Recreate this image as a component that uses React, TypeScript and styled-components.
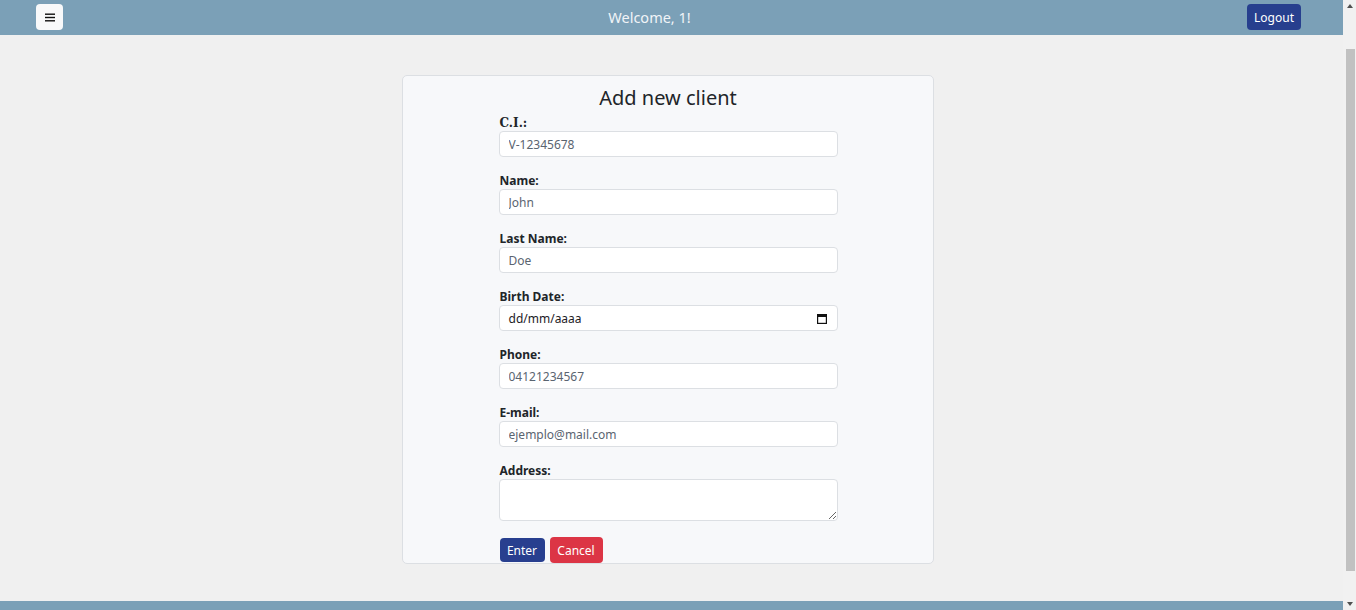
import React from "react";
import styled, { createGlobalStyle } from "styled-components";

const GlobalStyle = createGlobalStyle`
  html, body { margin: 0; padding: 0; }
  body {
    background: #f0f0f0;
    font-family: "Noto Sans", "DejaVu Sans", sans-serif;
    color: #212529;
    overflow: hidden;
  }
  * { box-sizing: border-box; }
`;

const Page = styled.div`
  display: flex;
  flex-direction: column;
  margin-right: 13px;
`;

const NavBar = styled.header`
  height: 35px;
  background: #7ba0b7;
  display: flex;
  align-items: center;
  justify-content: space-between;
  padding: 0 42px 1px 36px;
`;

const MenuButton = styled.button`
  width: 27px;
  height: 26px;
  border: none;
  border-radius: 4px;
  background: #f8f9fa;
  display: flex;
  align-items: center;
  justify-content: center;
  padding: 0;
  cursor: pointer;
`;

const Welcome = styled.span`
  color: #f1f4f7;
  font-size: 14.5px;
  line-height: 20px;
  margin-right: 11px;
`;

const LogoutButton = styled.button`
  height: 26px;
  width: 54px;
  border: none;
  border-radius: 4px;
  background: #273f8e;
  color: #ffffff;
  font-family: "Noto Sans", sans-serif;
  font-size: 12px;
  padding: 0;
  cursor: pointer;
`;

const Main = styled.main`
  display: flex;
  justify-content: center;
  padding: 40px 7px 37px 0;
`;

const Card = styled.section`
  width: 532px;
  background: #f7f8fa;
  border: 1px solid #dcdfe3;
  border-radius: 5px;
  padding: 8px 0 0;
  display: flex;
  flex-direction: column;
  align-items: center;
`;

const Title = styled.h2`
  margin: 0 0 4px;
  font-size: 20px;
  font-weight: 400;
  line-height: 27px;
  color: #212529;
`;

const Form = styled.form`
  width: 339px;
  display: flex;
  flex-direction: column;
  gap: 16px;
`;

const Field = styled.div`
  display: flex;
  flex-direction: column;
  gap: 2px;
`;

const Label = styled.label<{ $serif?: boolean }>`
  font-size: 12px;
  font-weight: 700;
  line-height: 14px;
  padding: 1px 0 0 1px;
  margin-bottom: -1px;
  color: #212529;
  font-family: ${(p) => (p.$serif ? '"DejaVu Serif", serif' : '"Noto Sans", sans-serif')};
`;

const Input = styled.input`
  height: 26px;
  width: 100%;
  border: 1px solid #dcdfe3;
  border-radius: 4px;
  background: #ffffff;
  padding: 0 9px;
  font-family: "Noto Sans", sans-serif;
  font-size: 12px;
  color: #212529;
  outline: none;
  &::placeholder { color: #5a6470; }
`;

const DateBox = styled.div`
  height: 26px;
  width: 100%;
  border: 1px solid #dcdfe3;
  border-radius: 4px;
  background: #ffffff;
  padding: 0 10px 0 9px;
  display: flex;
  align-items: center;
  justify-content: space-between;
  font-size: 12px;
  color: #1d2125;
`;

const TextArea = styled.textarea`
  height: 42px;
  width: 100%;
  border: 1px solid #dcdfe3;
  border-radius: 4px;
  background: #ffffff;
  resize: vertical;
  font-family: "Noto Sans", sans-serif;
  font-size: 12px;
  display: block;
  outline: none;
`;

const Actions = styled.div`
  display: flex;
  align-items: center;
  gap: 5px;
  padding-left: 1px;
`;

const ActionButton = styled.button<{ $variant: "primary" | "danger" }>`
  border: none;
  border-radius: 4px;
  color: #ffffff;
  font-family: "Noto Sans", sans-serif;
  font-size: 12px;
  padding: 0;
  cursor: pointer;
  background: ${(p) => (p.$variant === "primary" ? "#283f8f" : "#dc3545")};
  width: ${(p) => (p.$variant === "primary" ? "45px" : "53px")};
  height: ${(p) => (p.$variant === "primary" ? "24px" : "26px")};
`;

const Footer = styled.footer`
  height: 40px;
  background: #7ba0b7;
`;

const ScrollTrack = styled.div`
  position: fixed;
  top: 0;
  right: 0;
  width: 13px;
  height: 100vh;
  background: #f1f1f1;
  display: flex;
  flex-direction: column;
  align-items: center;
  justify-content: space-between;
  padding: 4px 0 4px;
`;

const ScrollThumb = styled.div`
  width: 9px;
  height: 522px;
  margin: 0 0 0 1px;
  background: #c1c1c1;
`;

const Arrow = styled.div<{ $down?: boolean }>`
  width: 0;
  height: 0;
  border-left: 3.5px solid transparent;
  border-right: 3.5px solid transparent;
  ${(p) =>
    p.$down
      ? "border-top: 4px solid #505050;"
      : "border-bottom: 4px solid #505050;"}
`;

const ThumbZone = styled.div`
  flex: 1;
  display: flex;
  flex-direction: column;
  padding-top: 41px;
  align-self: stretch;
  align-items: center;
`;

const fields = [
  { label: "Name:", placeholder: "John" },
  { label: "Last Name:", placeholder: "Doe" },
];

export default function App() {
  return (
    <Page>
      <GlobalStyle />
      <NavBar>
        <MenuButton aria-label="menu">
          <svg width="10" height="9" viewBox="0 0 10 9">
            <rect x="0" y="0.5" width="10" height="1.4" fill="#111" />
            <rect x="0" y="3.8" width="10" height="1.4" fill="#111" />
            <rect x="0" y="7.1" width="10" height="1.4" fill="#111" />
          </svg>
        </MenuButton>
        <Welcome>Welcome, 1!</Welcome>
        <LogoutButton>Logout</LogoutButton>
      </NavBar>
      <Main>
        <Card>
          <Title>Add new client</Title>
          <Form onSubmit={(e) => e.preventDefault()}>
            <Field>
              <Label $serif>C.I.:</Label>
              <Input placeholder="V-12345678" />
            </Field>
            {fields.map((f) => (
              <Field key={f.label}>
                <Label>{f.label}</Label>
                <Input placeholder={f.placeholder} />
              </Field>
            ))}
            <Field>
              <Label>Birth Date:</Label>
              <DateBox>
                <span>dd/mm/aaaa</span>
                <svg width="10" height="11" viewBox="0 0 10 11">
                  <rect x="0.6" y="1.6" width="8.8" height="8.8" fill="none" stroke="#111" strokeWidth="1.2" />
                  <rect x="0.6" y="1.6" width="8.8" height="2.4" fill="#111" />
                </svg>
              </DateBox>
            </Field>
            <Field>
              <Label>Phone:</Label>
              <Input placeholder="04121234567" />
            </Field>
            <Field>
              <Label>E-mail:</Label>
              <Input placeholder="ejemplo@mail.com" />
            </Field>
            <Field>
              <Label>Address:</Label>
              <TextArea />
            </Field>
            <Actions>
              <ActionButton $variant="primary" type="submit">Enter</ActionButton>
              <ActionButton $variant="danger" type="button">Cancel</ActionButton>
            </Actions>
          </Form>
        </Card>
      </Main>
      <Footer />
      <ScrollTrack aria-hidden="true">
        <Arrow />
        <ThumbZone>
          <ScrollThumb />
        </ThumbZone>
        <Arrow $down />
      </ScrollTrack>
    </Page>
  );
}
